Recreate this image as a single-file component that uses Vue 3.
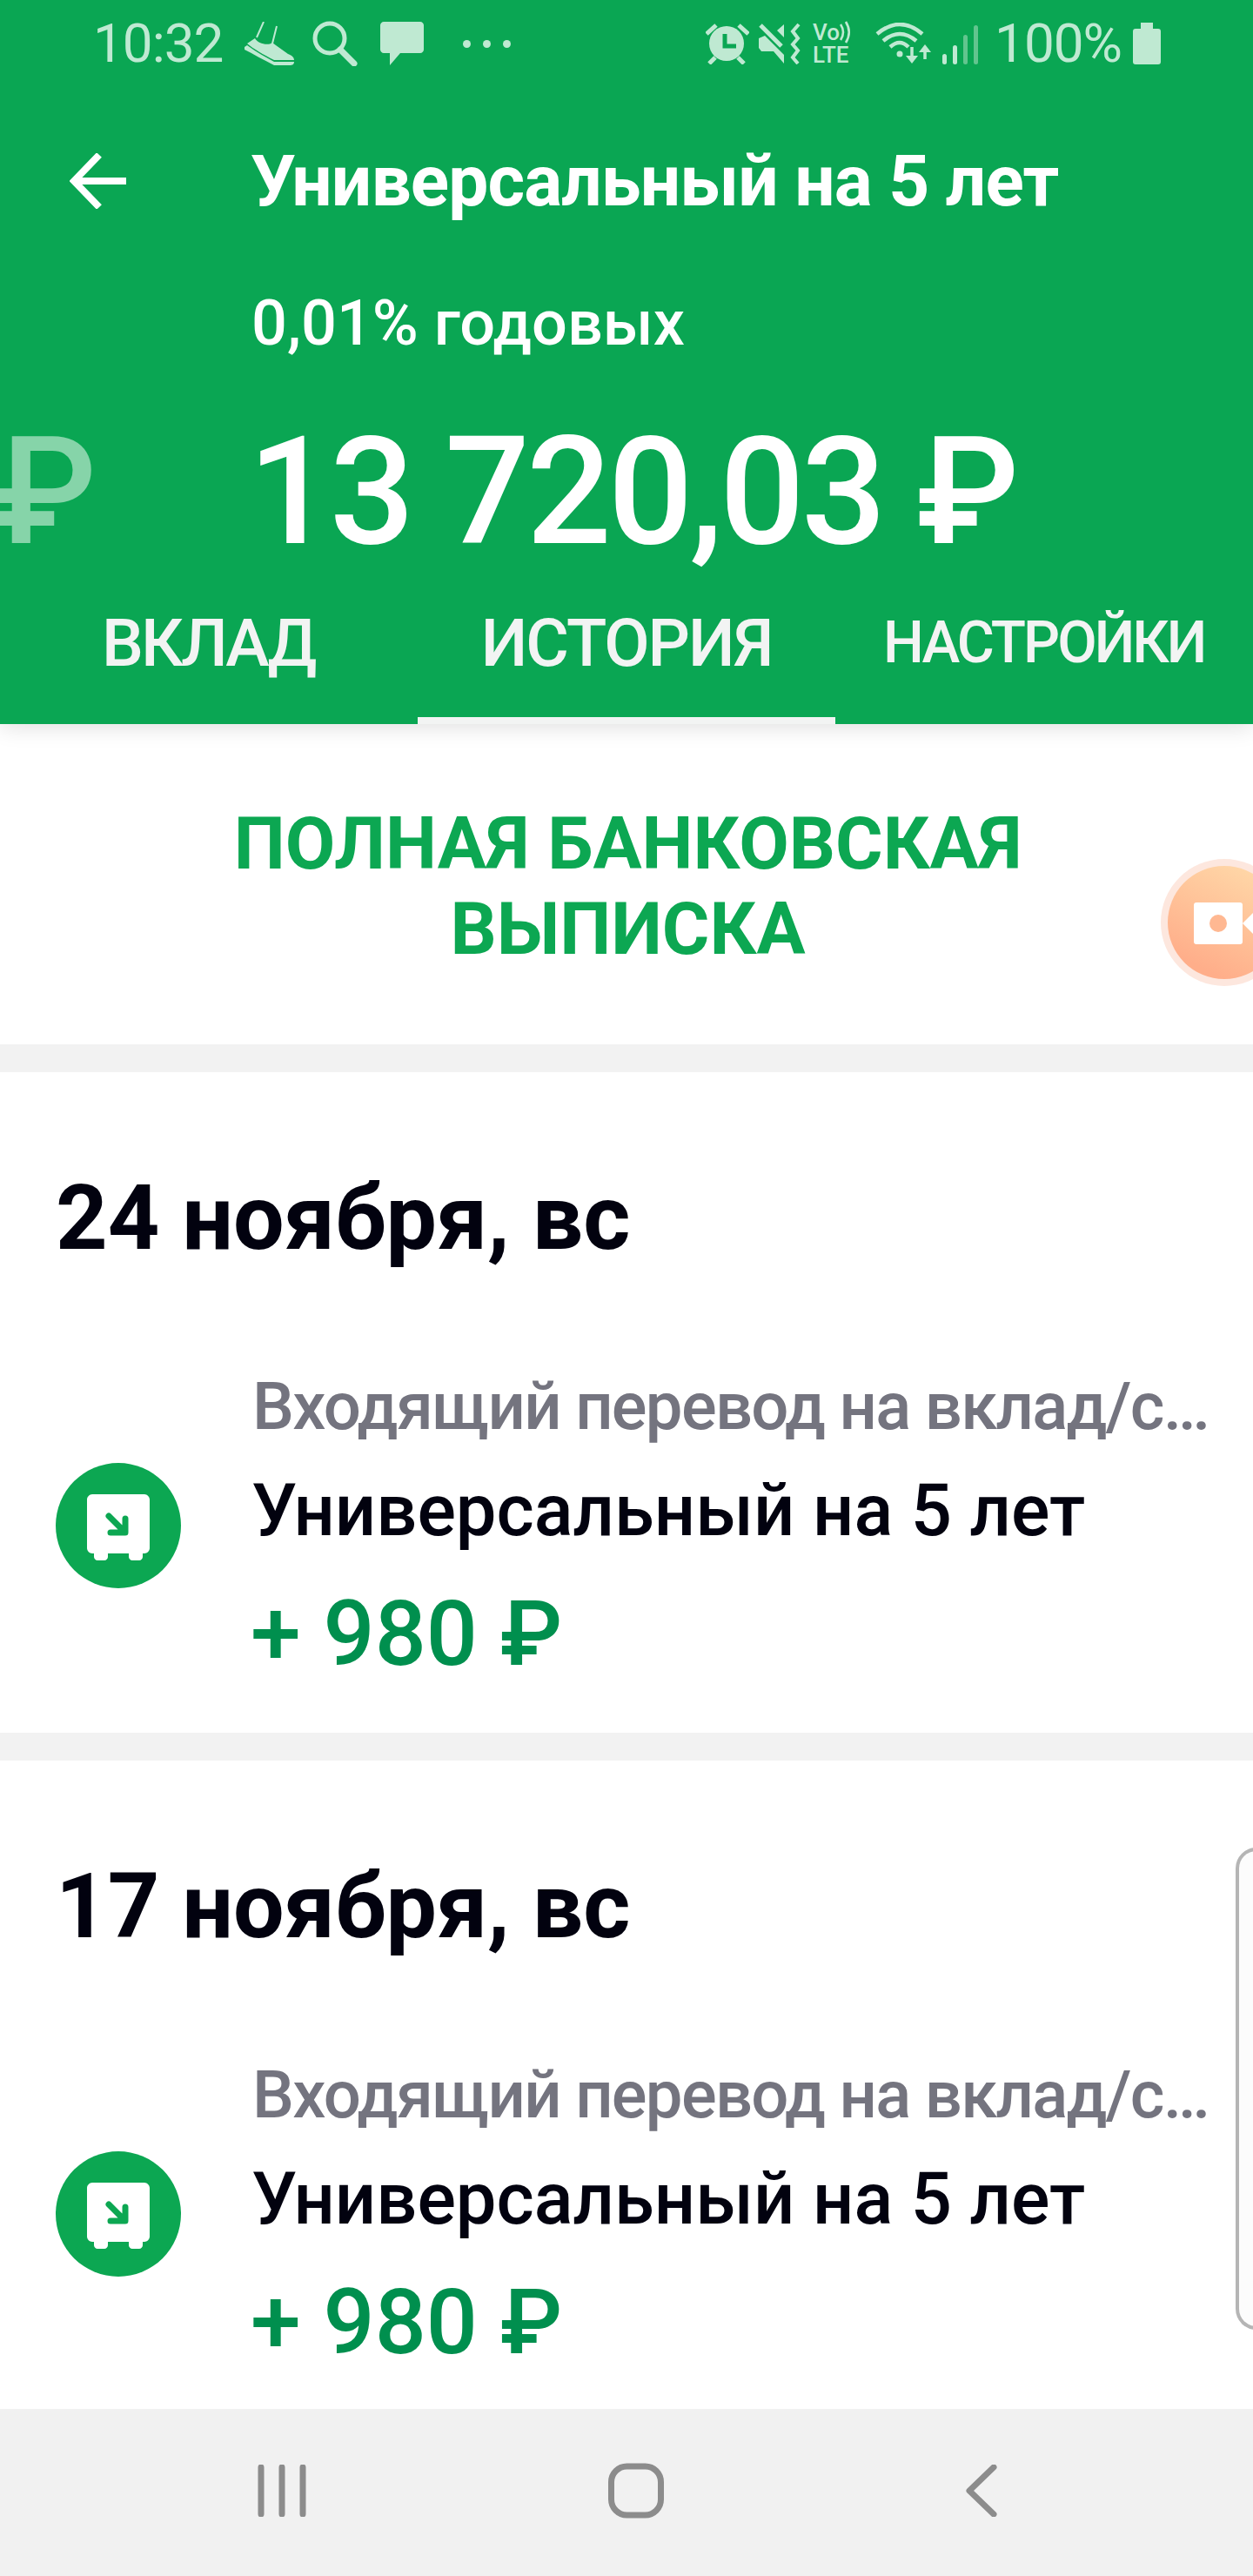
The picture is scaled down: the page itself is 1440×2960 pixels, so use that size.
<script setup>
const tabs = [
  { label: 'ВКЛАД', cls: 'tab-one' },
  { label: 'ИСТОРИЯ', cls: 'tab-two', active: true },
  { label: 'НАСТРОЙКИ', cls: 'tab-three' },
]

const days = [
  { date: '24 ноября, вс', amount: '+ 980 ₽' },
  { date: '17 ноября, вс', amount: '+ 980 ₽' },
]
</script>

<template>
  <div class="screen">
    <header class="top">
      <div class="status">
        <div class="status-left">
          <span class="clock">10:32</span>
          <svg class="ic-shoe" width="58" height="50" viewBox="0 0 58 50">
            <path d="M22 0 L14 18 M37 5 L32 25" stroke="#bfe9d2" stroke-width="2" fill="none" />
            <path d="M12 19 C15 25 27 28 32 24 L36 27 L50 37 C55 39 57 41 57 44 L34 44 C22 38 10 31 3 25 Z" fill="#bfe9d2" />
            <path d="M0 29 L3 27 C14 35 25 41 34 46 L57 46 C57 49 55 50 52 50 L34 50 C22 44 10 37 0 32 Z" fill="#bfe9d2" />
          </svg>
          <svg class="ic-search" width="52" height="52" viewBox="0 0 52 52">
            <circle cx="20" cy="20" r="17" stroke="#bfe9d2" stroke-width="5" fill="none" />
            <path d="M32 33 L48 49" stroke="#bfe9d2" stroke-width="7" stroke-linecap="round" />
          </svg>
          <svg class="ic-chat" width="50" height="50" viewBox="0 0 50 50">
            <path d="M4 0 H46 C48 0 50 2 50 4 V32 C50 34 48 36 46 36 H23 L11 50 V36 H4 C2 36 0 34 0 32 V4 C0 2 2 0 4 0 Z" fill="#bfe9d2" />
          </svg>
          <div class="dots"><i></i><i></i><i></i></div>
        </div>
        <div class="status-right">
          <svg class="ic-alarm" width="50" height="48" viewBox="0 0 50 48">
            <circle cx="24" cy="24" r="20" fill="#bfe9d2" />
            <path d="M22 13 V27 H35" stroke="#0aa653" stroke-width="5" fill="none" />
            <path d="M1 13 L12 3 M38 3 L49 13 M4 47 L11 40 M44 47 L37 40" stroke="#bfe9d2" stroke-width="5" />
          </svg>
          <svg class="ic-mute" width="48" height="48" viewBox="0 0 48 48">
            <path d="M0 18 L7 15 L29 37 V47 L17 33 H3 L0 29 Z M29 2 V17 L21 9 Z" fill="#bfe9d2" />
            <path d="M2 3 L26 27" stroke="#bfe9d2" stroke-width="5" />
            <path d="M46 2 L39 10 L45 18 L39 25 L45 32 L39 40 L45 47" stroke="#bfe9d2" stroke-width="4" fill="none" />
          </svg>
          <div class="volte">
            <span class="vo">Vo<svg width="14" height="26" viewBox="0 0 14 26"><path d="M1 4 C5 10 5 16 1 22 M7 1 C12 9 12 17 7 25" stroke="#bfe9d2" stroke-width="2.6" fill="none" /></svg></span>
            <span class="lte">LTE</span>
          </div>
          <svg class="ic-wifi" width="64" height="48" viewBox="0 0 64 48">
            <path d="M2 13 Q28 -9 54 13 M9 21 Q28 5 47 21 M17 28 Q28 18 38 28" stroke="#bfe9d2" stroke-width="4.5" fill="none" />
            <circle cx="28" cy="36" r="3.5" fill="#bfe9d2" />
            <path d="M42 28 V42" stroke="#bfe9d2" stroke-width="3.5" />
            <path d="M35 38 H49 L42 47 Z" fill="#bfe9d2" />
            <path d="M57 31 V42" stroke="#bfe9d2" stroke-width="3.5" />
            <path d="M50 34 H64 L57 25 Z" fill="#bfe9d2" />
          </svg>
          <svg class="ic-signal" width="42" height="48" viewBox="0 0 42 48">
            <rect x="0" y="36" width="5" height="12" rx="2.5" fill="#bfe9d2" />
            <rect x="12" y="26" width="5" height="22" rx="2.5" fill="#bfe9d2" />
            <rect x="24" y="14" width="5" height="34" rx="2.5" fill="#62c58e" />
            <rect x="36" y="3" width="5" height="45" rx="2.5" fill="#62c58e" />
          </svg>
          <span class="percent">100%</span>
          <svg class="ic-battery" width="32" height="48" viewBox="0 0 32 48">
            <path d="M9 0 H23 V7 H29 C31 7 32 8 32 10 V45 C32 47 31 48 29 48 H3 C1 48 0 47 0 45 V10 C0 8 1 7 3 7 H9 Z" fill="#bfe9d2" />
          </svg>
        </div>
      </div>

      <div class="toolbar">
        <svg class="back" width="66" height="64" viewBox="0 0 66 64">
          <path d="M65 32 H5 M34 2 L5 32 L34 62" stroke="#fff" stroke-width="8" fill="none" />
        </svg>
        <h1 class="title">Универсальный на 5 лет</h1>
      </div>

      <div class="rate">0,01% годовых</div>
      <div class="balance">
        <span class="ghost">₽</span>
        <span class="sum">13 720,03 ₽</span>
      </div>

      <nav class="tabs">
        <div v-for="tab in tabs" :key="tab.label" class="tab" :class="[tab.cls, { active: tab.active }]">{{ tab.label }}</div>
      </nav>
    </header>

    <main class="content">
      <section class="statement">
        <a class="statement-link">ПОЛНАЯ БАНКОВСКАЯ<br />ВЫПИСКА</a>
      </section>

      <section v-for="day in days" :key="day.date" class="day">
        <h2 class="date">{{ day.date }}</h2>
        <div class="row">
          <svg class="safe" width="144" height="144" viewBox="0 0 144 144">
            <circle cx="72" cy="72" r="72" fill="#0ca752" />
            <path d="M42 36 H102 C105 36 108 39 108 42 V98 C108 101 105 104 102 104 H100 V108 C100 110 98 112 96 112 H88 C86 112 84 110 84 108 V104 H60 V108 C60 110 58 112 56 112 H48 C46 112 44 110 44 108 V104 H42 C39 104 36 101 36 98 V42 C36 39 39 36 42 36 Z" fill="#fff" />
            <path d="M61 61 L79 79 M80 64 V80 H63" stroke="#0ca752" stroke-width="7" stroke-linecap="round" stroke-linejoin="round" fill="none" />
          </svg>
          <div class="row-text">
            <div class="row-type">Входящий перевод на вклад/счёт</div>
            <div class="row-name">Универсальный на 5 лет</div>
            <div class="row-sum">{{ day.amount }}</div>
          </div>
        </div>
      </section>

      <div class="edge"></div>
      <div class="record">
        <svg width="106" height="146" viewBox="0 0 106 146">
          <defs>
            <linearGradient id="rec" x1="0.75" y1="0" x2="0.3" y2="0.9">
              <stop offset="0" stop-color="#ffd8a8" />
              <stop offset="1" stop-color="#ffae8a" />
            </linearGradient>
          </defs>
          <circle cx="73" cy="73" r="73" fill="#fde7de" />
          <circle cx="73" cy="73" r="65" fill="url(#rec)" />
          <rect x="38" y="50" width="56" height="48" rx="3" fill="#fff" />
          <circle cx="66" cy="74" r="10" fill="#ffb892" />
          <path d="M94 74 L106 62 V86 Z" fill="#fff" />
        </svg>
      </div>
    </main>

    <footer class="navbar">
      <svg width="56" height="60" viewBox="0 0 56 60">
        <path d="M4 3 V57 M28 3 V57 M52 3 V57" stroke="#8c8c8c" stroke-width="7" stroke-linecap="round" />
      </svg>
      <svg width="64" height="64" viewBox="0 0 64 64">
        <rect x="3.5" y="4" width="57" height="56" rx="18" stroke="#8c8c8c" stroke-width="7" fill="none" />
      </svg>
      <svg width="36" height="60" viewBox="0 0 36 60">
        <path d="M32 3 L4 30 L32 57" stroke="#8c8c8c" stroke-width="7" stroke-linecap="round" stroke-linejoin="round" fill="none" />
      </svg>
    </footer>
  </div>
</template>

<style scoped>
.screen {
  position: relative;
  width: 1440px;
  height: 2960px;
  overflow: hidden;
  display: flex;
  flex-direction: column;
  background: #f2f2f2;
  font-family: Roboto, "Liberation Sans", sans-serif;
}

.top {
  position: relative;
  z-index: 2;
  height: 832px;
  flex: none;
  background: #0aa653;
  box-shadow: 0 4px 24px rgba(0, 0, 0, 0.12);
  color: #fff;
  overflow: hidden;
}

.status {
  display: flex;
  justify-content: space-between;
  align-items: center;
  height: 100px;
  padding: 0 106px 0 107px;
  color: #bfe9d2;
}

.status-left,
.status-right {
  display: flex;
  align-items: center;
}

.clock,
.percent {
  font-size: 62px;
  line-height: 100px;
  letter-spacing: -1px;
}

.ic-shoe { margin-left: 25px; }
.ic-search { margin-left: 20px; }
.ic-chat { margin-left: 26px; }

.dots {
  display: flex;
  gap: 14px;
  margin-left: 45px;
}

.dots i {
  width: 9px;
  height: 9px;
  border-radius: 50%;
  background: #bfe9d2;
}

.ic-mute { margin-left: 11px; }

.volte {
  display: flex;
  flex-direction: column;
  width: 50px;
  margin-left: 14px;
  font-size: 26px;
  font-weight: 500;
  line-height: 26px;
}

.vo { display: flex; align-items: center; }
.ic-wifi { margin-left: 22px; }
.ic-signal { margin-left: 13px; }
.percent { margin-left: 18px; }
.ic-battery { margin-left: 13px; }

.toolbar {
  display: flex;
  align-items: center;
  height: 120px;
  margin-top: 48px;
  padding-left: 80px;
}

.back { flex: none; }

.title {
  margin: 0 0 0 142px;
  font-size: 82px;
  font-weight: 700;
  letter-spacing: -0.9px;
  line-height: 120px;
  white-space: nowrap;
}

.rate {
  margin-top: 64px;
  margin-left: 289px;
  font-size: 72px;
  font-weight: 500;
  line-height: 80px;
}

.balance {
  position: relative;
  height: 190px;
  margin-top: 58px;
  font-size: 172px;
  font-weight: 500;
  letter-spacing: -4px;
  line-height: 190px;
  white-space: nowrap;
}

.sum { margin-left: 285px; }

.ghost {
  position: absolute;
  right: 1333px;
  top: 0;
  color: #86d4a9;
}

.tabs {
  display: flex;
  height: 142px;
  margin-top: 30px;
}

.tab {
  display: flex;
  justify-content: center;
  box-sizing: border-box;
  padding-top: 4px;
  height: 142px;
  color: #f2f4f3;
  font-size: 76px;
  font-weight: 500;
  letter-spacing: -3px;
  line-height: 90px;
  white-space: nowrap;
}

.tab-one { width: 480px; justify-content: flex-start; padding-left: 117px; }
.tab-two { width: 480px; border-bottom: 8px solid #f2f4f3; letter-spacing: -2px; }
.tab-three { width: 480px; font-size: 66px; justify-content: flex-start; padding-left: 55px; }

.content {
  position: relative;
  flex: 1;
  display: flex;
  flex-direction: column;
  gap: 32px;
  overflow: hidden;
}

.statement {
  display: flex;
  justify-content: center;
  align-items: center;
  flex: none;
  height: 368px;
  background: #fff;
}

.statement-link {
  padding: 6px 0 0 3px;
  color: #0ca752;
  font-size: 83.5px;
  font-weight: 700;
  line-height: 98px;
  text-align: center;
}

.day {
  flex: none;
  height: 759px;
  box-sizing: border-box;
  padding: 108px 64px 0 64px;
  background: #fff;
}

.date {
  margin: 0;
  color: #02020f;
  font-size: 104px;
  font-weight: 700;
  line-height: 120px;
}

.row {
  display: flex;
  align-items: center;
  margin-top: 106px;
}

.safe { flex: none; position: relative; top: 3px; }

.row-text {
  flex: none;
  width: 1125px;
  margin-left: 82px;
}

.row-type {
  overflow: hidden;
  color: #74747f;
  font-size: 76px;
  font-weight: 500;
  letter-spacing: -1.7px;
  line-height: 100px;
  white-space: nowrap;
  text-overflow: ellipsis;
}

.row-name {
  margin-top: 20px;
  margin-left: -1px;
  color: #02020f;
  font-size: 83px;
  font-weight: 500;
  line-height: 100px;
  white-space: nowrap;
}

.row-sum {
  margin-top: 37px;
  margin-left: -2px;
  color: #008f4e;
  font-size: 104px;
  font-weight: 500;
  line-height: 110px;
}

.edge {
  position: absolute;
  top: 1291px;
  right: -6px;
  width: 26px;
  height: 554px;
  box-sizing: border-box;
  border: 4px solid #b5b5b5;
  border-radius: 24px 0 0 24px;
  background: #fcfcfc;
}

.record {
  position: absolute;
  top: 155px;
  right: 0;
  height: 146px;
}

.record svg { display: block; }

.navbar {
  display: flex;
  flex: none;
  align-items: center;
  height: 192px;
  position: relative;
  z-index: 2;
  box-sizing: border-box;
  padding: 0 294px 4px 296px;
  justify-content: space-between;
  background: #f1f1f1;
}
</style>
